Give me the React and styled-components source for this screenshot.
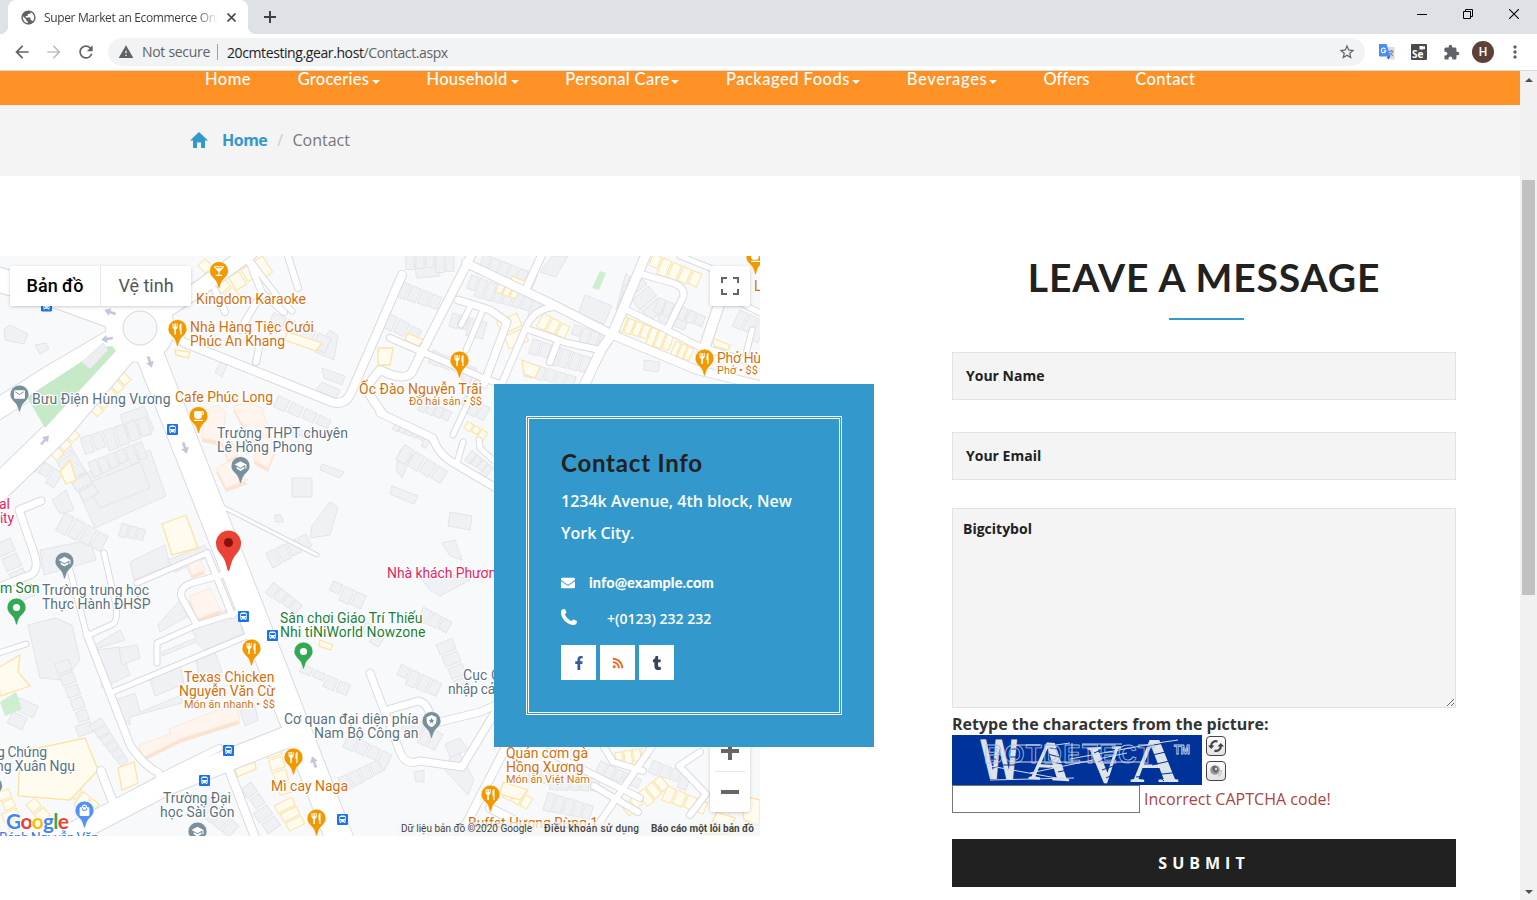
import React from "react";
import styled, { createGlobalStyle, css } from "styled-components";
import {
  MdArrowBack, MdArrowForward, MdRefresh, MdWarning, MdStarBorder, MdExtension, MdMoreVert,
  MdPublic, MdRestaurant, MdLocalBar, MdLocalCafe, MdSchool, MdEmail,
  MdLocalMall, MdDirectionsBus, MdLocalPolice,
} from "react-icons/md";
import { FaFacebookF, FaRss, FaTumblr, FaEnvelope } from "react-icons/fa";

const GlobalStyle = createGlobalStyle`
  * { box-sizing: border-box; }
  body { margin: 0; background: #fff; overflow: hidden; font-family: "Open Sans", "Noto Sans", sans-serif; }
`;

const Window = styled.div`
  width: 1537px;
  height: 900px;
  display: flex;
  flex-direction: column;
  overflow: hidden;
`;

/* ---------- browser chrome ---------- */

const TabStrip = styled.div`
  height: 34px;
  flex: none;
  background: #dee1e6;
  display: flex;
  align-items: stretch;
  padding-left: 8px;
`;
const Tab = styled.div`
  position: relative;
  width: 240px;
  background: #fff;
  border-radius: 8px 8px 0 0;
  display: flex;
  align-items: center;
  padding: 0 9px 0 12px;
  color: #3c4043;
  &::before, &::after {
    content: "";
    position: absolute;
    bottom: 0;
    width: 8px;
    height: 8px;
  }
  &::before { left: -8px; background: radial-gradient(circle at 0 0, transparent 8px, #fff 8.5px); }
  &::after { right: -8px; background: radial-gradient(circle at 100% 0, transparent 8px, #fff 8.5px); }
`;
const TabTitle = styled.span`
  flex: none;
  width: 174px;
  margin-left: 7px;
  overflow: hidden;
  white-space: nowrap;
  font-size: 12px;
  letter-spacing: -0.36px;
  mask-image: linear-gradient(to right, #000 152px, transparent 174px);
`;
const TabClose = styled.span`
  display: flex;
  margin-left: 7px;
`;
const NewTab = styled.span`
  display: flex;
  align-items: center;
  margin-left: 16px;
`;
const WindowButtons = styled.div`
  margin-left: auto;
  display: flex;
  width: 138px;
`;
const WindowButton = styled.span`
  width: 46px;
  height: 28px;
  display: flex;
  align-items: center;
  justify-content: center;
`;

const Toolbar = styled.div`
  height: 37px;
  flex: none;
  background: #fff;
  border-bottom: 1px solid #d8dade;
  display: flex;
  align-items: center;
  padding-left: 12px;
  color: #5f6368;
`;
const ToolIcon = styled.span`
  flex: none;
  width: 32px;
  display: flex;
  color: ${(p) => p.$color || "#5f6368"};
`;
const Extensions = styled.div`
  flex: none;
  display: flex;
  margin-left: 6px;
`;
const Extension = styled.span`
  width: 32px;
  display: flex;
  align-items: center;
  justify-content: center;
`;
const AddressBar = styled.div`
  flex: none;
  width: 1257px;
  height: 28px;
  border-radius: 14px;
  background: #f1f3f4;
  display: flex;
  align-items: center;
  padding: 0 9px 0 10px;
  font-size: 14px;
  letter-spacing: -0.3px;
`;
const NotSecure = styled.span`
  width: 76px;
  margin-left: 8px;
  border-right: 1px solid #9aa0a6;
  line-height: 16px;
  white-space: nowrap;
`;
const Url = styled.span`
  margin-left: 9px;
  color: #5f6368;
  letter-spacing: -0.4px;
  b { font-weight: 400; color: #202124; }
`;
const Star = styled.span`
  margin-left: auto;
  display: flex;
`;
const Avatar = styled.span`
  width: 22px;
  height: 22px;
  border-radius: 50%;
  background: #5d4037;
  color: #fff;
  font: 500 12px Roboto, sans-serif;
  display: flex;
  align-items: center;
  justify-content: center;
`;

/* ---------- page ---------- */

const Viewport = styled.div`
  flex: 1;
  display: flex;
  min-height: 0;
`;
const Page = styled.main`
  width: 1520px;
  overflow: hidden;
`;
const Scrollbar = styled.div`
  width: 17px;
  background: #f1f1f1;
  display: flex;
  flex-direction: column;
  align-items: center;
  padding: 7px 0 6px;
`;
const ScrollArrow = styled.span`
  border: 4px solid transparent;
  ${(p) => (p.$down
    ? css`border-top-color: #505050; border-bottom: 0; margin-top: auto;`
    : css`border-bottom-color: #505050; border-top: 0;`)}
`;
const ScrollThumb = styled.span`
  width: 13px;
  height: 415px;
  margin-top: 98px;
  background: #c1c1c1;
`;

const Nav = styled.nav`
  height: 34px;
  background: #fe9126;
  display: flex;
  gap: 46.75px;
  padding-left: 205px;
`;
const NavItem = styled.a`
  flex: none;
  width: ${(p) => p.$w}px;
  height: 17px;
  display: flex;
  align-items: center;
  justify-content: space-between;
  color: #fff;
  font: 500 16.5px/17px Lato, sans-serif;
  letter-spacing: ${(p) => p.$ls}px;
  white-space: nowrap;
`;
const Caret = styled.i`
  flex: none;
  border: 4px solid transparent;
  border-top-color: #fff;
  border-bottom: 0;
  margin-top: 4px;
`;

const Breadcrumb = styled.div`
  height: 71px;
  background: #f4f4f4;
  display: flex;
  align-items: center;
  padding: 0 0 2px 190px;
  font-size: 16px;
  color: #777;
  a { width: 46px; margin-left: 14px; color: #3399cc; font-weight: 700; letter-spacing: -0.5px; }
  i { width: 24.5px; font-style: normal; color: #ccc; text-align: center; }
`;

const Content = styled.section`
  display: flex;
  padding-top: 80px;
`;
const MapArea = styled.div`
  position: relative;
  width: 760px;
  height: 580px;
  margin-right: 192px;
`;
const MapSvg = styled.svg`
  display: block;
`;
const MapControl = styled.div`
  position: absolute;
  background: #fff;
  border-radius: 2px;
  box-shadow: 0 1px 4px -1px rgba(0, 0, 0, 0.3);
  display: flex;
`;
const MapTypes = styled(MapControl)`
  left: 10px;
  top: 10px;
  width: 181px;
  height: 40px;
`;
const MapType = styled.button`
  flex: 1;
  border: 0;
  padding: 0 0 2px;
  background: none;
  color: ${(p) => (p.$active ? "#000" : "#565656")};
  font: ${(p) => (p.$active ? 500 : 400)} 18px Roboto, sans-serif;
  & + & { border-left: 1px solid #e6e6e6; }
`;
const Fullscreen = styled(MapControl)`
  right: 10px;
  top: 10px;
  width: 40px;
  height: 40px;
  align-items: center;
  justify-content: center;
`;
const Zoom = styled(MapControl)`
  right: 10px;
  top: 475px;
  width: 40px;
  height: 81px;
  flex-direction: column;
`;
const ZoomButton = styled.span`
  height: 40px;
  margin: 0 5px;
  display: flex;
  align-items: center;
  justify-content: center;
  & + & { border-top: 1px solid #e6e6e6; }
`;

const InfoCard = styled.aside`
  position: absolute;
  left: 494px;
  top: 128px;
  width: 380px;
  height: 363px;
  padding: 32px;
  background: #3399cc;
`;
const InfoFrame = styled.div`
  height: 299px;
  padding: 30px 32px;
  border: 3px double #fff;
  color: #fff;
  font-weight: 600;
`;
const InfoTitle = styled.h4`
  margin: 0 0 8px;
  color: #212121;
  font: 700 24px/28px Lato, sans-serif;
  letter-spacing: 0.78px;
`;
const Address = styled.p`
  margin: 0;
  font-size: 16px;
  line-height: 32px;
  letter-spacing: 0;
`;
const InfoLine = styled.div`
  height: 36px;
  display: flex;
  align-items: center;
  margin-top: ${(p) => p.$top || 0}px;
  font-size: 14px;
`;
const InfoIcon = styled.span`
  width: ${(p) => p.$w}px;
  display: flex;
  padding-bottom: ${(p) => p.$lift || 0}px;
`;
const Mail = styled.span`
  font-family: Lato, sans-serif;
  font-size: 14.5px;
  font-weight: 900;
  letter-spacing: 0.1px;
  padding-bottom: 2px;
`;
const Phone = styled.span`
  padding-bottom: 2px;
`;
const Socials = styled.div`
  display: flex;
  gap: 4px;
  margin-top: 8px;
`;
const Social = styled.a`
  width: 35px;
  height: 35px;
  background: #fff;
  color: ${(p) => p.$color};
  display: flex;
  align-items: center;
  justify-content: center;
`;

const Form = styled.form`
  width: 504px;
  display: flex;
  flex-direction: column;
`;
const FormTitle = styled.h3`
  margin: 0;
  height: 62px;
  text-align: center;
  color: #212121;
  font: 700 39px/43px Lato, sans-serif;
  letter-spacing: 0.9px;
  white-space: nowrap;
`;
const Rule = styled.div`
  width: 75px;
  height: 2px;
  margin-left: 217px;
  background: #3399cc;
`;
const fieldBox = css`
  width: 504px;
  border: 1px solid #e2e2e2;
  border-radius: 0;
  background: #f4f4f4;
  color: #212121;
  font: 700 14px "Open Sans", sans-serif;
  letter-spacing: 0;
  outline: none;
`;
const Field = styled.input`
  ${fieldBox}
  height: 48px;
  margin-top: 32px;
  padding: 0 13px 2px;
  &::placeholder { color: #212121; opacity: 1; }
`;
const Message = styled.textarea`
  ${fieldBox}
  height: 200px;
  margin-top: 28px;
  padding: 10px;
  display: block;
  resize: vertical;
`;
const CaptchaLabel = styled.label`
  height: 27px;
  line-height: 32px;
  font-size: 16px;
  font-weight: 700;
  letter-spacing: 0;
  color: #333;
`;
const CaptchaRow = styled.div`
  height: 50px;
  display: flex;
  gap: 4px;
`;
const CaptchaTools = styled.div`
  display: flex;
  flex-direction: column;
  gap: 5px;
  padding-top: 1px;
`;
const CaptchaTool = styled.span`
  width: 20px;
  height: 20px;
  border: 1px solid #444;
  border-radius: 4px;
  background: linear-gradient(#fff, #e2e2e2);
  display: flex;
  align-items: center;
  justify-content: center;
`;
const CodeRow = styled.div`
  height: 54px;
  display: flex;
`;
const CodeInput = styled.input`
  width: 188px;
  height: 28px;
  border: 1px solid #767676;
  border-radius: 0;
  outline: none;
`;
const CodeError = styled.span`
  margin-left: 4px;
  line-height: 28px;
  font-size: 16px;
  color: #a94442;
  letter-spacing: 0.02px;
`;
const Submit = styled.button`
  height: 48px;
  border: 0;
  background: #212121;
  color: #fff;
  font: 700 16px "Open Sans", sans-serif;
  letter-spacing: 5px;
  padding: 0;
`;

/* ---------- map drawing ---------- */

const MAIN_ROADS = [
  ["M148 350L227 550L340 840", 27],
  ["M-4 279L60 297L140 326", 24],
  ["M-4 410L50 376L120 335", 20],
  ["M-6 492L60 428L124 352", 25],
  ["M150 320L200 288L250 252", 15],
  ["M-4 872L60 840L165 785L292 735", 21],
];
const ROADS = [
  ["M165 330L185 343L270 377L332 402Q345 406 351 393L402 275", 8],
  ["M256 362L260 343", 6],
  ["M247 256L280 300L292 311", 5],
  ["M215 290L225 312M240 330L262 293L247 256M262 293L284 312M288 256L298 288", 6],
  ["M473 252L423 350L412 372Q405 382 380 370L365 388L382 413", 8],
  ["M390 338L483 378L500 384", 6],
  ["M466 263L550 303L613 335L697 370L764 386", 8],
  ["M527 287L543 252M458 300L490 310L507 322L484 384", 7],
  ["M470 307L461 325M482 312L466 350", 5],
  ["M647 252L613 333L601 350L583 388", 9],
  ["M553 307Q532 310 525 330L500 388M527 329L567 343L600 350M558 341L550 362", 6],
  ["M627 310L667 330L700 347L764 366M667 330L683 297Q686 288 673 283L641 274", 6],
  ["M722 296L703 352", 10],
  ["M735 300L764 315M752 330L746 354M680 256L720 272", 5],
  ["M380 413L433 438Q438 455 457 465L496 488", 7],
  ["M453 435L477 383M457 463L463 442M493 460L480 448L479 440", 5],
  ["M41 501L19 510L34 553Q40 570 30 575L-4 588", 7],
  ["M70 570L87 636L113 624Q118 620 116 605L104 553M-4 654L26 644", 5],
  ["M87 634L110 693L130 745Q143 765 159 773L160 785", 7],
  ["M110 693L247 636M157 663L157 643L197 625L245 610M137 583L207 553", 5],
  ["M197 625L181 596Q180 587 192 583L233 572M207 553L232 615M216 548L240 602", 6],
  ["M160 777L219 748", 6],
  ["M230 772L256 840M101 771L112 800", 8],
  ["M223 507L317 555", 3],
  ["M370 673L384 710L400 752Q405 766 420 761L462 767L494 714", 7],
  ["M387 710L418 701Q426 702 430 714L440 722L480 712L496 705", 7],
  ["M458 840L507 745M490 808L525 826", 8],
  ["M604 747L613 762L643 771M653 745L600 822M594 786L638 812M548 752L640 798", 6],
  ["M700 752L679 766L706 794L690 815", 6],
];

// Rows of houses: start, end, how many, depth, kind (g grey, y yellow)
const ROWS = [
  [60, 445, 92, 498, 5, 17, "g"], [82, 447, 150, 425, 6, 18, "g"], [20, 455, 60, 480, 4, 14, "g"],
  [90, 470, 145, 448, 6, 15, "g"], [90, 410, 128, 375, 5, 15, "y"], [50, 455, 76, 430, 3, 11, "y"],
  [200, 262, 236, 300, 4, 12, "y"], [232, 285, 268, 262, 3, 16, "y"], [270, 318, 330, 345, 4, 13, "g"],
  [275, 400, 330, 426, 4, 11, "g"], [268, 560, 310, 540, 4, 14, "g"], [270, 586, 300, 610, 4, 10, "g"],
  [330, 586, 365, 602, 3, 12, "g"], [300, 668, 350, 690, 4, 9, "g"], [405, 262, 455, 262, 5, 15, "g"],
  [398, 288, 440, 305, 4, 15, "g"], [384, 318, 420, 337, 3, 13, "g"], [480, 262, 535, 284, 6, 18, "g"],
  [468, 282, 540, 309, 8, 16, "g"], [450, 320, 486, 330, 4, 15, "g"], [430, 356, 475, 375, 4, 13, "g"],
  [498, 285, 518, 295, 3, 12, "y"], [507, 316, 520, 346, 2, 20, "y"], [540, 318, 568, 333, 3, 12, "y"],
  [572, 330, 608, 342, 4, 12, "g"], [530, 346, 590, 366, 6, 16, "g"], [525, 369, 575, 384, 5, 14, "g"],
  [618, 322, 672, 343, 7, 15, "y"], [673, 347, 692, 355, 3, 13, "y"], [630, 280, 660, 315, 3, 20, "g"],
  [650, 260, 700, 281, 5, 14, "y"], [735, 318, 764, 332, 3, 19, "g"], [678, 312, 704, 323, 3, 13, "g"],
  [656, 304, 680, 314, 3, 14, "g"], [395, 423, 430, 442, 6, 9, "g"], [400, 450, 445, 478, 4, 14, "g"],
  [462, 400, 488, 414, 3, 12, "g"], [465, 425, 486, 437, 3, 9, "y"], [468, 455, 490, 473, 4, 12, "g"],
  [420, 403, 450, 418, 4, 12, "g"], [420, 612, 450, 628, 3, 12, "g"], [445, 640, 465, 690, 4, 14, "g"],
  [398, 670, 440, 690, 4, 13, "g"], [404, 722, 440, 742, 4, 16, "g"], [520, 775, 600, 785, 8, 15, "g"],
  [506, 790, 530, 805, 3, 13, "y"], [545, 800, 592, 814, 5, 16, "g"], [598, 765, 640, 785, 5, 10, "g"],
  [615, 758, 650, 752, 4, 10, "y"], [625, 812, 665, 780, 5, 13, "y"], [650, 766, 690, 782, 4, 13, "g"],
  [664, 792, 706, 810, 4, 14, "y"], [272, 745, 286, 795, 4, 13, "y"], [284, 800, 298, 828, 3, 16, "y"],
  [200, 800, 235, 832, 4, 14, "g"], [245, 785, 276, 830, 4, 13, "g"], [345, 740, 390, 762, 4, 14, "g"],
  [340, 785, 382, 766, 4, 14, "g"], [62, 660, 88, 735, 6, 13, "g"], [96, 720, 124, 765, 6, 11, "g"],
  [70, 790, 96, 810, 3, 13, "y"], [2, 790, 18, 830, 4, 13, "y"], [46, 820, 30, 800, 2, 12, "y"],
  [2, 540, 28, 600, 4, 16, "g"], [60, 520, 105, 545, 4, 18, "g"], [120, 528, 145, 535, 3, 10, "g"],
  [15, 728, 28, 700, 2, 18, "g"], [352, 620, 384, 640, 3, 12, "g"],
];
const GREY_SHAPES = [
  "4 329 10 325 28 334 24 344 5 340", "35 345 46 343 49 349 40 354", "72 478 150 450 166 496 95 528",
  "86 484 140 462 150 488 100 508", "120 415 144 406 154 430 128 438", "292 478 312 478 312 497 292 497",
  "322 464 344 472 340 478 320 470", "312 526 330 502 338 507 330 535 310 538", "275 515 281 515 283 522 275 522",
  "414 264 438 261 440 276 417 278", "552 256 568 256 556 277 540 272", "585 295 612 306 604 324 578 314",
  "616 310 630 277 626 273", "662 303 690 316 684 330 658 320", "644 360 660 362 658 372 644 370",
  "392 486 418 496 414 504 390 494", "450 512 472 516 470 530 448 526", "400 450 412 455 402 478 396 470",
  "28 625 55 618 72 625 80 660 64 680 40 678", "90 648 120 630 125 640 92 650", "96 650 120 647 130 675 102 688",
  "116 700 135 693 140 712 182 695 182 703 130 717 130 725 115 712", "150 680 180 665 184 684 155 696",
  "158 625 180 600 190 615 160 632", "162 652 196 638 190 625 236 606 243 634 205 650 196 642 162 656",
  "130 562 165 545 170 565 134 580", "119 648 137 645 140 658 122 665", "196 660 215 652 222 672 200 680",
  "445 770 455 745 474 780 468 795", "414 772 424 770 424 782 416 782", "445 744 460 738 468 750 450 757",
  "418 575 445 572 470 580 440 596 430 590", "442 543 455 540 462 560 450 556", "222 360 228 363 222 377 215 372",
  "52 500 66 490 74 510 60 514", "40 550 90 540 96 560 44 575", "168 560 205 545 210 556 175 572",
  "290 425 315 436 310 440 288 430", "240 710 255 706 258 720 245 726", "315 352 330 330 338 336 334 360",
  "322 368 345 376 342 385 324 378", "312 395 322 382 340 390 334 404",
];
const YELLOW_SHAPES = [
  "287 332 322 343 316 351 285 340", "162 524 186 515 198 548 172 555", "175 350 190 352 188 358 176 355",
  "-2 668 20 655 18 672 30 686 0 696", "20 752 85 738 98 770 70 800 18 796", "118 768 134 762 138 783 122 790",
  "512 276 526 282 522 292 510 288", "522 360 540 367 535 378 524 374", "407 333 424 340 418 346 405 340",
  "378 348 393 348 390 365 378 365", "717 812 735 818 728 834 706 834", "740 795 760 800 760 826 744 820",
  "503 782 528 790 520 800 500 794", "235 769 255 762 256 769 237 777", "60 472 70 460 76 480 66 484",
  "320 640 333 645 330 650 319 646", "5 406 14 402 16 410 6 412", "712 338 730 345 728 350 714 346",
];
const PEACH_SHAPES = [
  "205 410 218 405 226 412 224 425 238 455 228 460 222 442 202 438", "233 406 248 403 262 408 275 450 268 468 254 460 256 442 240 420",
  "216 468 232 460 245 478 248 480 226 488", "189 597 210 588 221 610 197 619",
  "187 564 200 559 205 570 192 575", "139 745 171 734 169 729 210 713 236 702 240 720 180 739 142 758",
];

function houses([x0, y0, x1, y1, count, depth, kind], row) {
  const angle = (Math.atan2(y1 - y0, x1 - x0) * 180) / Math.PI;
  const step = Math.hypot(x1 - x0, y1 - y0) / count;
  return Array.from({ length: count }, (_, i) => {
    const vary = ((row * 7 + i * 5) % 6) - 2;
    const t = (i + 0.5) / count;
    return (
      <rect
        key={`${row}-${i}`}
        x={-step * 0.42} y={-depth / 2} width={step * 0.82} height={depth + vary}
        transform={`translate(${x0 + (x1 - x0) * t} ${y0 + (y1 - y0) * t}) rotate(${angle})`}
        fill={kind === "y" ? "#fffbee" : "#f0f1f4"}
        stroke={kind === "y" ? "#fde3a5" : "#e4e5e9"}
      />
    );
  });
}

const ORANGE = "#d46f0d";
const SLATE = "#5a7280";
const GREEN = "#188038";
const PINK = "#e91e63";

// text, x, baseline, width, colour, size
const LABELS = [
  ["Kingdom Karaoke", 196, 304, 110, ORANGE], ["Nhà Hàng Tiệc Cưới", 190, 332, 124, ORANGE],
  ["Phúc An Khang", 190, 346, 95, ORANGE], ["Bưu Điện Hùng Vương", 32, 404, 138.5, SLATE],
  ["Cafe Phúc Long", 175, 402, 98, ORANGE], ["Trường THPT chuyên", 217, 438, 131, SLATE],
  ["Lê Hồng Phong", 217, 452, 95.5, SLATE], ["Ốc Đào Nguyễn Trãi", 359, 394, 123, ORANGE],
  ["Đồ hải sản • $$", 409, 405, 73, ORANGE, 11], ["Phở Hùng", 717, 363, 59, ORANGE],
  ["Phở • $$", 717, 374, 41, ORANGE, 11], ["L", 754, 291, 8, ORANGE],
  ["al", -1, 509, 11, PINK], ["ity", 0, 523, 14, PINK], ["Nhà khách Phương", 387, 578, 117, PINK],
  ["m Sơn", 0, 593, 39.5, GREEN], ["Trường trung học", 42, 595, 107, SLATE],
  ["Thực Hành ĐHSP", 42, 609, 108.5, SLATE], ["Sân chơi Giáo Trí Thiếu", 280, 623, 142.5, GREEN],
  ["Nhi tiNiWorld Nowzone", 280, 637, 145.5, GREEN], ["Texas Chicken", 184, 682, 90.5, ORANGE],
  ["Nguyễn Văn Cừ", 179, 696, 96, ORANGE], ["Món ăn nhanh • $$", 184, 708, 91, ORANGE, 11],
  ["Cục C", 463, 680, 37, SLATE], ["nhập cảnh", 448, 694, 62, SLATE],
  ["Cơ quan đại diện phía", 284, 724, 134.5, SLATE], ["Nam Bộ Công an", 314, 738, 104.5, SLATE],
  ["g Chứng", -3, 757, 50, SLATE], ["ng Xuân Ngụ", -4, 771, 79, SLATE],
  ["Trường Đại", 163, 803, 68, SLATE], ["học Sài Gòn", 160, 817, 74.5, SLATE],
  ["Mì cay Naga", 271, 791, 77, ORANGE], ["Bánh Nguyễn Văn", -1, 843, 100, "#3f7ae8"],
  ["Quán cơm gà", 506, 758, 82, ORANGE], ["Hồng Xương", 506, 772, 77.5, ORANGE],
  ["Món ăn Việt Nam", 506, 783, 84, ORANGE, 11], ["Buffet Hương Rừng 1", 468, 828, 130, ORANGE],
];

const PINS = [
  [219, 271, "#f29900", MdLocalBar], [177.5, 329, "#f29900", MdRestaurant], [19.5, 394.5, "#78909c", MdEmail],
  [198.5, 416, "#f29900", MdLocalCafe], [240.5, 466, "#78909c", MdSchool], [459.5, 360.5, "#f29900", MdRestaurant],
  [704.5, 358.5, "#f29900", MdRestaurant], [755.5, 257, "#f29900", MdLocalCafe], [64.5, 561.5, "#78909c", MdSchool],
  [16.5, 607.5, "#34a853"], [303.5, 651.5, "#34a853"], [251.5, 648.5, "#f29900", MdRestaurant],
  [293.5, 757.5, "#f29900", MdRestaurant], [316.5, 818.5, "#f29900", MdRestaurant], [84.5, 810.5, "#5491f5", MdLocalMall],
  [197.5, 831.5, "#78909c", MdSchool], [-7, 786, "#78909c"], [431.5, 721, "#78909c", MdLocalPolice],
  [490.5, 794.5, "#f29900", MdRestaurant],
];
const BUSES = [[46.5, 306], [172.5, 429.5], [243.5, 616.5], [272.5, 635.5], [228.5, 750.5], [204.5, 780.5], [342.5, 819.5]];
const ARROWS = [[110, 312, 200], [107, 339, 170], [150, 362, 72], [45, 440, -48], [185, 448, 72], [314, 762, -110]];

// Fork on the left, knife on the right
function Cutlery() {
  return (
    <g fill="#fff">
      <path d="M-5 -5.500V-2Q-5 0 -3.200 .4V5.500H-1.600V.4Q.2 0 .2 -2V-5.500H-.8V-2.200H-1.700V-5.500H-3.100V-2.200H-4V-5.500Z" />
      <path d="M2 5.500V-3.500Q2.300 -5.500 4 -5.500V5.500H2.800V1.500H2Z" />
    </g>
  );
}

function Pin({ x, y, color, Icon }) {
  let glyph = <circle r="3.6" fill="#fff" />;
  if (Icon === MdRestaurant) glyph = <Cutlery />;
  else if (Icon) glyph = <Icon x={-6.5} y={-6.5} size={13} color="#fff" />;
  return (
    <g transform={`translate(${x} ${y})`}>
      <path d="M0 17.5C-1.2 17.5 -1.2 14 -3 10.5C-5 7 -9.5 5 -9.5 0A9.5 9.5 0 0 1 9.5 0C9.5 5 5 7 3 10.5C1.2 14 1.2 17.5 0 17.5Z" fill={color} stroke="#fff" strokeWidth="0.7" />
      {glyph}
    </g>
  );
}

function CityMap() {
  const road = (list, extra, color) => list.map(([d, w]) => (
    <path key={d} d={d} fill="none" stroke={color} strokeWidth={w + extra} strokeLinecap="round" strokeLinejoin="round" />
  ));
  return (
    <MapSvg width="760" height="580" viewBox="0 256 760 580" fontFamily="Roboto, sans-serif">
      <rect y="256" width="760" height="580" fill="#f8f9fb" />
      {GREY_SHAPES.map((p) => <polygon key={p} points={p} fill="#f0f1f4" stroke="#e4e5e9" />)}
      {ROWS.map(houses)}
      {PEACH_SHAPES.map((p) => (
        <g key={p}>
          <polygon points={p} fill="#fbe3d0" transform="translate(0 4)" />
          <polygon points={p} fill="#fff5ee" stroke="#fde9da" />
        </g>
      ))}
      {YELLOW_SHAPES.map((p) => <polygon key={p} points={p} fill="#fffbee" stroke="#fde3a5" strokeWidth="1.3" />)}
      {road(MAIN_ROADS, 2, "#d9dbe1")}
      <circle cx="140" cy="328" r="35" fill="#d9dbe1" />
      {road(ROADS, 2, "#d9dbe1")}
      {road(MAIN_ROADS, 0, "#fff")}
      <circle cx="140" cy="328" r="34" fill="#fff" />
      {road(ROADS, 0, "#fff")}
      <circle cx="140" cy="328" r="17" fill="#f8f9fb" stroke="#d5d7df" />
      <polygon points="27 397 104 347 112 346 116 351 45 428" fill="#c6e9c8" />
      <polygon points="82 362 103 343 108 350 90 369" fill="#eceef0" stroke="#e2e4e8" />
      <polygon points="600 271 606 273 599 290 592 288" fill="#ceefcf" />
      <polygon points="0 702 16 692 22 709 5 716" fill="#ceefcf" />
      {ARROWS.map(([x, y, a]) => (
        <path key={`${x}`} transform={`translate(${x} ${y}) rotate(${a})`} d="M-6 -1.3H0V-4L6 0L0 4V1.3H-6Z" fill="#c3c7da" />
      ))}
      {BUSES.map(([x, y]) => (
        <g key={`${x}`} transform={`translate(${x} ${y})`}>
          <rect x="-5.5" y="-5.5" width="11" height="11" rx="1" fill="#1a73e8" />
          <MdDirectionsBus x={-4.8} y={-4.8} size={9.6} color="#fff" />
        </g>
      ))}
      {PINS.map(([x, y, color, Icon]) => <Pin key={`${x}`} x={x} y={y} color={color} Icon={Icon} />)}
      {LABELS.map(([text, x, y, w, color, size = 14]) => (
        <text key={text} x={x} y={y} textLength={w} fontSize={size} fill={color} stroke="#fff" strokeWidth="2.5" strokeLinejoin="round" paintOrder="stroke">{text}</text>
      ))}
      <path d="M228.500 571C227 571 227 565 224 559C221 553 216 551 216 543A12.500 12.500 0 0 1 241 543C241 551 236 553 233 559C230 565 230 571 228.500 571Z" fill="#ea4335" />
      <circle cx="228.500" cy="542.500" r="4.500" fill="#811411" />
      <rect x="396" y="822" width="364" height="14" fill="#f5f5f5" fillOpacity="0.72" />
      <g fontSize="10" fill="#444">
        <text x="401" y="832" textLength="131">Dữ liệu bản đồ ©2020 Google</text>
        <text x="544" y="832" textLength="95" fontWeight="500">Điều khoản sử dụng</text>
        <text x="651" y="832" textLength="103" fontWeight="700">Báo cáo một lỗi bản đồ</text>
      </g>
      <text x="6" y="829" fontSize="21" fontWeight="700" fontFamily="Lato, sans-serif" textLength="63" stroke="#fff" strokeWidth="2.500" paintOrder="stroke">
        <tspan fill="#4285f4">G</tspan><tspan fill="#ea4335">o</tspan><tspan fill="#fbbc05">o</tspan>
        <tspan fill="#4285f4">g</tspan><tspan fill="#34a853">l</tspan><tspan fill="#ea4335">e</tspan>
      </text>
    </MapSvg>
  );
}

function CaptchaImage() {
  return (
    <svg width="250" height="50" viewBox="0 0 250 50">
      <rect width="250" height="50" fill="#003399" />
      <g fontWeight="700" fill="#dfe3ea">
        <text transform="translate(31 44) skewX(4) scale(.78 1.150)" fontSize="50" fontFamily="Liberation Sans, sans-serif">W</text>
        <text transform="translate(76 44) rotate(3) scale(1.150 1.130)" fontSize="50" fontFamily="Liberation Serif, serif">A</text>
        <text transform="translate(136 48) rotate(-2) scale(1.050 1.180)" fontSize="46" fontFamily="Liberation Serif, serif">V</text>
        <text transform="translate(178 47) scale(1.350 1.280)" fontSize="50" fontFamily="Liberation Serif, serif">A</text>
      </g>
      <g stroke="#003399" strokeWidth="1">
        <path d="M36 12L41 11M37 18L43 17M38 25L44 24M40 33L46 32M55 14H76M56 22H72M48 30H70M98 13L112 15M96 19L114 24M100 27L116 30M86 35L100 33M106 37L120 34M142 18L156 12M146 27L160 22M150 35L164 30M154 43L166 37M192 12L212 8M196 21L218 16M200 30L222 25M184 42L228 37M205 40L212 46" />
      </g>
      <text x="32" y="28" fontFamily="Liberation Sans, sans-serif" fontSize="26" fontWeight="700" fill="none" stroke="#a9bde0" strokeWidth="0.8" textLength="170">BOTDETECT</text>
      <g stroke="#d5dbe8" fill="none" strokeWidth="1">
        <path d="M32 4L40 44M38 45L122 43M38 31L110 44M62 27H190M78 38L175 18M118 24L205 8M60 10H88M120 8V27M205 8L226 5M104 10L118 8M130 9H170" />
      </g>
      <text x="222" y="19" fontFamily="Liberation Sans, sans-serif" fontSize="12" fontWeight="700" fill="none" stroke="#c9d4e8" strokeWidth="0.800" textLength="16" lengthAdjust="spacingAndGlyphs">TM</text>
    </svg>
  );
}

const NAV = [
  ["Home", 46, 0.45], ["Groceries", 82, 0.2, true], ["Household", 92, 0.25, true], ["Personal Care", 114, 0.32, true],
  ["Packaged Foods", 134, 0.48, true], ["Beverages", 90, 0.65, true], ["Offers", 45, -0.1], ["Contact", 60, 0.4],
];

export default function App() {
  return (
    <Window>
      <GlobalStyle />
      <TabStrip>
        <Tab>
          <MdPublic size={17} color="#5f6368" />
          <TabTitle>Super Market an Ecommerce Online Shopping</TabTitle>
          <TabClose>
            <svg width="13" height="13"><path d="M2.500 2.500L10.500 10.500M10.500 2.500L2.500 10.500" stroke="#3c4043" strokeWidth="1.700" /></svg>
          </TabClose>
        </Tab>
        <NewTab><svg width="12" height="12"><path d="M6 0V12M0 6H12" stroke="#3c4043" strokeWidth="2" /></svg></NewTab>
        <WindowButtons>
          <WindowButton><svg width="10" height="10"><path d="M0 5.500H10" stroke="#000" /></svg></WindowButton>
          <WindowButton><svg width="10" height="10"><path d="M.5 2.500H7.500V9.500H.5ZM2.500 2.500V.5H9.500V7.500H7.500" fill="none" stroke="#000" /></svg></WindowButton>
          <WindowButton><svg width="10" height="10"><path d="M0 0L10 10M10 0L0 10" stroke="#000" strokeWidth="1.100" /></svg></WindowButton>
        </WindowButtons>
      </TabStrip>

      <Toolbar>
        <ToolIcon><MdArrowBack size={20} /></ToolIcon>
        <ToolIcon $color="#bdc1c6"><MdArrowForward size={20} /></ToolIcon>
        <ToolIcon><MdRefresh size={20} /></ToolIcon>
        <AddressBar>
          <MdWarning size={16} />
          <NotSecure>Not secure</NotSecure>
          <Url><b>20cmtesting.gear.host</b>/Contact.aspx</Url>
          <Star><MdStarBorder size={18} /></Star>
        </AddressBar>
        <Extensions>
          <Extension>
            <svg width="16" height="16" viewBox="0 0 16 16">
              <path d="M5 3H15.500V15.500H9Z" fill="#dadce0" />
              <path d="M0 0H7.500L11.500 12.500H1.200Q0 12.500 0 11.200Z" fill="#4a8cf7" />
              <path d="M8 12.500H11.500L9 15.500Z" fill="#3349c4" />
              <path d="M6.500 5.200A2.300 2.300 0 1 0 6.800 6.700H4.800" fill="none" stroke="#fff" strokeWidth="1.100" />
              <path d="M10 7.200H14.500M12.300 6V7.200M13.600 7.200Q13 10 11.300 11.500M11 8.500Q12.300 11 14.200 12" fill="none" stroke="#607d8b" strokeWidth=".9" />
            </svg>
          </Extension>
          <Extension>
            <svg width="16" height="16" viewBox="0 0 16 16">
              <rect width="16" height="16" rx="1" fill="#4a4a4a" />
              <path d="M8.500 2H12.500V3L14 2V5.500L12.500 4.500V5.500H8.500Z" fill="#fff" />
              <text x="1" y="14" fontFamily="Open Sans, sans-serif" fontSize="10" fontWeight="700" fill="#fff">Se</text>
            </svg>
          </Extension>
          <Extension><MdExtension size={17} /></Extension>
          <Extension><Avatar>H</Avatar></Extension>
          <Extension><MdMoreVert size={20} /></Extension>
        </Extensions>
      </Toolbar>

      <Viewport>
        <Page>
          <Nav>
            {NAV.map(([label, w, ls, menu]) => (
              <NavItem key={label} $w={w} $ls={ls}>{label}{menu && <Caret />}</NavItem>
            ))}
          </Nav>
          <Breadcrumb>
            <svg width="18" height="16" viewBox="0 0 18 16"><path d="M9 0L18 8.500H15V16H11V10.500H7V16H3V8.500H0Z" fill="#3399cc" /></svg>
            <a>Home</a><i>/</i><span>Contact</span>
          </Breadcrumb>

          <Content>
            <MapArea>
              <CityMap />
              <MapTypes>
                <MapType $active>Bản đồ</MapType>
                <MapType>Vệ tinh</MapType>
              </MapTypes>
              <Fullscreen>
                <svg width="18" height="18"><path d="M0 6V0H6V2H2V6ZM12 0H18V6H16V2H12ZM0 12V18H6V16H2V12ZM18 12V18H12V16H16V12Z" fill="#666" /></svg>
              </Fullscreen>
              <Zoom>
                <ZoomButton><svg width="18" height="18"><path d="M0 7H7V0H11V7H18V11H11V18H7V11H0Z" fill="#666" /></svg></ZoomButton>
                <ZoomButton><svg width="18" height="4"><rect width="18" height="4" fill="#666" /></svg></ZoomButton>
              </Zoom>
              <InfoCard>
                <InfoFrame>
                  <InfoTitle>Contact Info</InfoTitle>
                  <Address>1234k Avenue, 4th block, New York City.</Address>
                  <InfoLine $top={16}>
                    <InfoIcon $w={28}><FaEnvelope size={14} /></InfoIcon>
                    <Mail>info@example.com</Mail>
                  </InfoLine>
                  <InfoLine>
                    <InfoIcon $w={46} $lift={5}>
                      <svg width="16" height="16" viewBox="0 0 16 16"><path d="M1.200 0.600L3.600 0C4.200 0 4.500 1 5.300 3C5.600 3.800 5.300 4.100 3.900 5.200C4.600 7.600 8 11.300 10.900 12.100C12 10.700 12.200 10.400 13 10.700C15 11.500 16 11.800 16 12.400L15.400 14.800C14.600 15.700 13.200 16 12 16C5.500 15.400 0.200 9 0 4C0 2.500 0.300 1.300 1.200 0.600Z" fill="#fff" /></svg>
                    </InfoIcon>
                    <Phone>+(0123) 232 232</Phone>
                  </InfoLine>
                  <Socials>
                    <Social $color="#3b5998"><FaFacebookF size={14} /></Social>
                    <Social $color="#f26522"><FaRss size={12} /></Social>
                    <Social $color="#35465c"><FaTumblr size={14} /></Social>
                  </Socials>
                </InfoFrame>
              </InfoCard>
            </MapArea>

            <Form>
              <FormTitle>LEAVE A MESSAGE</FormTitle>
              <Rule />
              <Field placeholder="Your Name" />
              <Field placeholder="Your Email" />
              <Message defaultValue="Bigcitybol" />
              <CaptchaLabel>Retype the characters from the picture:</CaptchaLabel>
              <CaptchaRow>
                <CaptchaImage />
                <CaptchaTools>
                  <CaptchaTool>
                    <svg width="16" height="14" viewBox="0 0 16 14">
                      <path d="M3.200 7.500V6.500A4.500 4.500 0 0 1 9.500 2.500M12.800 6.500V7.500A4.500 4.500 0 0 1 6.500 11.500" fill="none" stroke="#444" strokeWidth="2.200" />
                      <path d="M0 6.500H6.500L3.200 10ZM16 7.500H9.500L12.800 4Z" fill="#444" />
                    </svg>
                  </CaptchaTool>
                  <CaptchaTool>
                    <svg width="14" height="14" viewBox="0 0 14 14">
                      <path d="M9 12Q13 10 12 6" fill="none" stroke="#ccc" strokeWidth="2" />
                      <circle cx="6" cy="6" r="4.800" fill="#999" />
                      <ellipse cx="6.500" cy="5.500" rx="2.600" ry="3.500" fill="#666" transform="rotate(-30 6 6)" />
                      <circle cx="7" cy="5" r="1.200" fill="#ddd" />
                    </svg>
                  </CaptchaTool>
                </CaptchaTools>
              </CaptchaRow>
              <CodeRow>
                <CodeInput />
                <CodeError>Incorrect CAPTCHA code!</CodeError>
              </CodeRow>
              <Submit type="button">SUBMIT</Submit>
            </Form>
          </Content>
        </Page>
        <Scrollbar>
          <ScrollArrow />
          <ScrollThumb />
          <ScrollArrow $down />
        </Scrollbar>
      </Viewport>
    </Window>
  );
}
